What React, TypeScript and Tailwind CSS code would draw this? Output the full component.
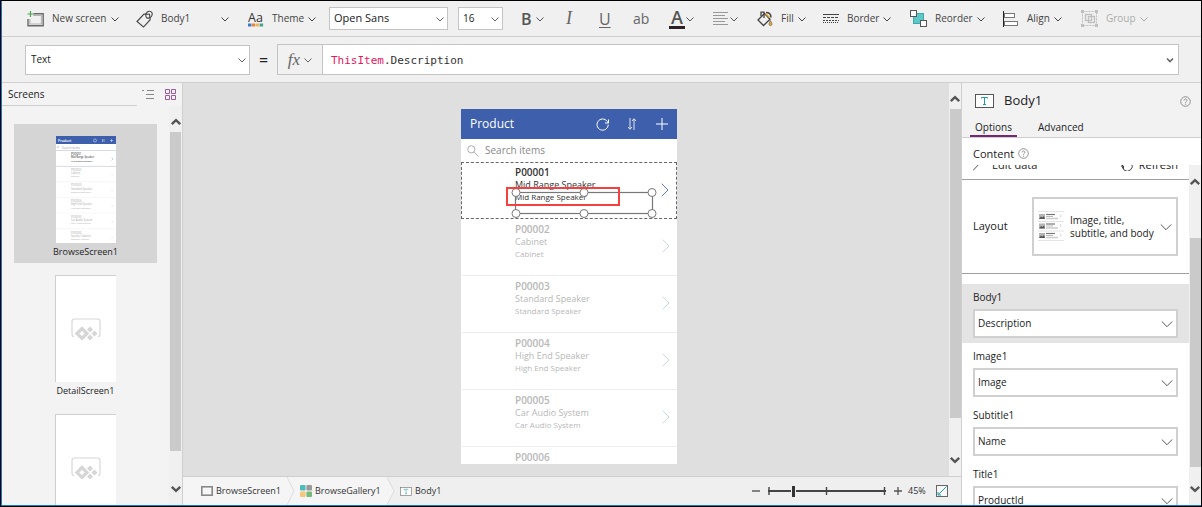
import React from "react";

const products = [
  { id: "P00001", name: "Mid Range Speaker" },
  { id: "P00002", name: "Cabinet" },
  { id: "P00003", name: "Standard Speaker" },
  { id: "P00004", name: "High End Speaker" },
  { id: "P00005", name: "Car Audio System" },
  { id: "P00006", name: "Speaker Cabinet" },
];

function Chevron({ className = "" }: { className?: string }) {
  return (
    <svg className={`h-2 w-2 shrink-0 ${className}`} viewBox="0 0 8 8" fill="none" stroke="currentColor" strokeWidth="1">
      <path d="M0.5 2.5 4 6 7.5 2.5" />
    </svg>
  );
}

function WideChevron({ className = "" }: { className?: string }) {
  return (
    <svg className={`h-2 w-3 shrink-0 text-[#555] ${className}`} viewBox="0 0 12 8" fill="none" stroke="currentColor" strokeWidth="1">
      <path d="M0.8 1.5 6 6.7 11.2 1.5" />
    </svg>
  );
}

function ScrollArrow({ down = false }: { down?: boolean }) {
  return (
    <svg className="h-2 w-3 shrink-0 text-[#555]" viewBox="0 0 12 8" fill="none" stroke="currentColor" strokeWidth="2.4">
      {down ? <path d="M1.8 1.8 6 5.8 10.2 1.8" /> : <path d="M1.8 6.2 6 2.2 10.2 6.2" />}
    </svg>
  );
}

function Tool({ icon, label, className = "" }: { icon: React.ReactNode; label: string; className?: string }) {
  return (
    <button type="button" className={`flex h-full shrink-0 items-center gap-2 text-[10px] text-[#444] ${className}`}>
      {icon}
      <span className="flex items-center gap-1 whitespace-nowrap">
        {label}
        <Chevron />
      </span>
    </button>
  );
}

function NewScreenIcon() {
  return (
    <svg className="h-4 w-[17px]" viewBox="0 0 17 16" fill="none">
      <path d="M6.500 2.700h9.700v12H1V8" stroke="#6a6a6a" strokeWidth="1.400" />
      <path d="M6 4.500h8.500v8.500H2.800V8" stroke="#b5b5b5" strokeWidth="1.200" />
      <path d="M3.500 0v6M.5 3h6" stroke="#4aa84a" strokeWidth="1.200" />
    </svg>
  );
}

function TagIcon() {
  return (
    <svg className="h-[18px] w-[17px]" viewBox="0 0 17 18" fill="none" stroke="#444" strokeWidth="1.1">
      <path d="M1 11.500 8 4l5.500.3.7 5.400L7.500 17z" />
      <path d="M10.500 7.500C9 5.500 10 1.500 13 1.200 16 1 17 4 15.500 6.200 14.500 7.700 12 9 10.500 7.500" />
    </svg>
  );
}

function ThemeIcon() {
  return (
    <svg className="h-4 w-4" viewBox="0 0 16 16">
      <text x="0" y="10.500" fontFamily="Open Sans" fontSize="12.500" fill="#333">Aa</text>
      <rect x="0" y="12.500" width="3.400" height="3" fill="#3c78c8" />
      <rect x="3.900" y="12.500" width="3.400" height="3" fill="#e8823a" />
      <rect x="7.800" y="12.500" width="3.400" height="3" fill="#e8b860" />
      <rect x="11.700" y="12.500" width="3.400" height="3" fill="#45a58c" />
    </svg>
  );
}

function FillIcon() {
  return (
    <svg className="h-4 w-4" viewBox="0 0 16 16" fill="none">
      <path d="M1 9 7.500 2.500 13 8.200 6.500 14.500z" stroke="#444" strokeWidth="1.300" />
      <path d="M4 5V1.200h3V7" stroke="#444" strokeWidth="1.300" />
      <path d="M9 1.500c3 0 5 2 5 5" stroke="#444" strokeWidth="1.500" />
      <path d="M8.500 2.500 12.500 6.500" stroke="#e2a82c" strokeWidth="1.500" />
      <path d="M13.300 9.500c1.200 2 2 3 1.600 4.200-.5 1.200-2.300 1.200-2.800 0-.3-1.200.4-2.400 1.200-4.200z" fill="#e2a82c" stroke="#555" strokeWidth=".6" />
    </svg>
  );
}

function BorderIcon() {
  return (
    <svg className="h-4 w-4" viewBox="0 0 16 16" stroke="#444" fill="none">
      <path d="M0 3.500h16" />
      <path d="M0 6.500h16" strokeDasharray="3 1" />
      <path d="M0 9.500h16" strokeDasharray="2 1" />
      <path d="M0 11.500h16" strokeDasharray="1 1" />
    </svg>
  );
}

function ReorderIcon() {
  return (
    <svg className="h-[17px] w-[17px]" viewBox="0 0 17 17">
      <rect x="3.500" y="3.500" width="10" height="10" fill="#5cc8c8" stroke="#3fa9ab" />
      <rect x=".5" y=".5" width="6" height="6" fill="#fff" stroke="#555" />
      <rect x="10.500" y="10.500" width="6" height="6" fill="#fff" stroke="#555" />
    </svg>
  );
}

function AlignIcon() {
  return (
    <svg className="h-4 w-4" viewBox="0 0 16 16" fill="#fff" stroke="#777">
      <path d="M.5 0v16" stroke="#222" />
      <rect x="1.500" y="2.500" width="10" height="4" />
      <rect x="1.500" y="10.500" width="13" height="4" />
    </svg>
  );
}

function GroupIcon() {
  return (
    <svg className="h-[17px] w-[17px]" viewBox="0 0 17 17" fill="none" stroke="#777">
      <rect x="1.500" y="1.500" width="14" height="14" strokeDasharray="2 1" />
      <rect x="4.500" y="4.500" width="6" height="6" strokeWidth="1.300" />
      <rect x="7.500" y="6.500" width="6" height="6" strokeWidth="1.300" />
      <path d="M0 1.500h3M14 1.500h3M0 15.500h3M14 15.500h3" strokeWidth="3" />
    </svg>
  );
}

function ParagraphIcon() {
  return (
    <svg className="h-[15px] w-4 shrink-0" viewBox="0 0 16 15" stroke="#999" fill="none">
      <path d="M0 1.500h15M0 4.500h12M0 7.500h15M0 10.500h12M0 13.500h15" />
    </svg>
  );
}

function TextIcon({ className = "" }: { className?: string }) {
  return (
    <svg className={className} viewBox="0 0 19 14" fill="none">
      <rect x=".5" y=".5" width="18" height="13" fill="#fff" stroke="#555" />
      <path d="M6.500 4.500V3.500h6v1M9.500 3.500v7M8 10.500h3" stroke="#1f9d9d" />
    </svg>
  );
}

function HelpIcon() {
  return (
    <svg className="h-[11px] w-[11px] shrink-0" viewBox="0 0 11 11" fill="none" stroke="#888">
      <circle cx="5.500" cy="5.500" r="4.800" strokeWidth=".9" />
      <path d="M4 4.400C4 2.500 7 2.500 7 4.300 7 5.500 5.500 5.300 5.500 6.800M5.500 7.700v1" strokeWidth=".9" />
    </svg>
  );
}

function Toolbar() {
  return (
    <header className="flex h-9 shrink-0 items-center overflow-hidden border-b border-[#cfcfcf] pl-[25px]">
      <Tool className="w-[109px]" icon={<NewScreenIcon />} label="New screen" />
      <button type="button" className="flex h-full w-28 shrink-0 items-center gap-2 text-[10px] text-[#444]">
        <TagIcon />
        <span className="w-[52px] text-left">Body1</span>
        <Chevron />
      </button>
      <Tool className="w-[81px]" icon={<ThemeIcon />} label="Theme" />
      <label className="relative mr-[10px] flex w-[119px] shrink-0 items-center">
        <select aria-label="Font" className="h-[23px] w-full appearance-none border border-[#c4c4c4] bg-white pl-1 text-[11px] text-[#222]">
          <option>Open Sans</option>
        </select>
        <Chevron className="pointer-events-none absolute right-1 text-[#666]" />
      </label>
      <label className="relative mr-[18px] flex w-[45px] shrink-0 items-center">
        <select aria-label="Font size" className="h-[23px] w-full appearance-none border border-[#c4c4c4] bg-white pl-1 text-[10px] text-[#222]">
          <option>16</option>
        </select>
        <Chevron className="pointer-events-none absolute right-1 text-[#666]" />
      </label>
      <button type="button" aria-label="Bold" className="flex h-full w-[45px] shrink-0 items-center gap-1 text-[#555]">
        <span className="text-[16px] font-semibold">B</span>
        <Chevron />
      </button>
      <button type="button" className="w-[33px] shrink-0 text-left font-['Liberation_Serif',serif] text-[18px] italic text-[#666]">I</button>
      <button type="button" className="w-[34px] shrink-0 text-left text-[16px] text-[#666] underline underline-offset-2">U</button>
      <button type="button" className="w-9 shrink-0 text-left text-[14px] text-[#666]">ab</button>
      <button type="button" aria-label="Font color" className="flex w-11 shrink-0 items-center gap-px text-[#555]">
        <span className="w-4 border-b-[3px] border-[#2b2024] text-center text-[18px] leading-[18px] font-semibold">A</span>
        <Chevron />
      </button>
      <button type="button" aria-label="Text alignment" className="flex w-11 shrink-0 items-center gap-px text-[#555]">
        <ParagraphIcon />
        <Chevron />
      </button>
      <Tool className="w-[66px]" icon={<FillIcon />} label="Fill" />
      <Tool className="w-[87px]" icon={<BorderIcon />} label="Border" />
      <Tool className="w-[93px]" icon={<ReorderIcon />} label="Reorder" />
      <Tool className="w-[78px]" icon={<AlignIcon />} label="Align" />
      <Tool className="opacity-40" icon={<GroupIcon />} label="Group" />
    </header>
  );
}

function FormulaBar() {
  return (
    <div className="flex h-[46px] shrink-0 items-center border-b border-[#cfcfcf] pr-[22px] pl-[23px]">
      <label className="relative flex w-[225px] shrink-0 items-center">
        <select aria-label="Property" className="h-[30px] w-full appearance-none border border-[#c4c4c4] bg-white pl-[5px] text-[10px] text-[#222]">
          <option>Text</option>
        </select>
        <Chevron className="pointer-events-none absolute right-1 text-[#666]" />
      </label>
      <span className="w-[27px] text-center text-[16px] text-[#222]">=</span>
      <div className="flex h-[31px] flex-1 items-center border border-[#c4c4c4] bg-white">
        <button type="button" className="flex h-full w-[45px] items-center justify-center gap-1 border-r border-[#c4c4c4] bg-[#f1f1f1] text-[#666]">
          <span className="font-['Liberation_Serif',serif] text-[17px] italic">fx</span>
          <Chevron />
        </button>
        <div role="textbox" aria-label="Formula" contentEditable suppressContentEditableWarning className="flex-1 pt-[3px] pl-2 font-['DejaVu_Sans_Mono',monospace] text-[11px] text-[#333] outline-none">
          <span className="text-[#e3195e]">ThisItem</span>.Description
        </div>
        <svg className="mr-1 h-2 w-2" viewBox="0 0 8 8" fill="none" stroke="#666" strokeWidth="1.600">
          <path d="M1 2.500 4 5.500 7 2.500" />
        </svg>
      </div>
    </div>
  );
}

function BrowseThumbnail() {
  return (
    <svg className="h-[107px] w-[60px] bg-white" viewBox="0 0 60 107" fontFamily="Open Sans" fontSize="3.200">
      <rect width="60" height="8" fill="#3e5fab" />
      <text x="2" y="5.800" fill="#fff" fontSize="3.500" fontWeight="600">Product</text>
      <circle cx="39" cy="4.500" r="1.500" fill="none" stroke="#cfd8ee" strokeWidth=".6" />
      <path d="M46.500 3v3M48 3v3M54 4.500h3M55.500 3v3" stroke="#cfd8ee" strokeWidth=".6" />
      <circle cx="2" cy="11" r="1" fill="none" stroke="#bbb" strokeWidth=".5" />
      <text x="6" y="12.800" fill="#999" fontSize="3">Search items</text>
      <path d="M0 14.500h60M0 30.500h60" stroke="#d5d9ea" />
      {products.map((p, i) => (
        <g key={p.id} transform={`translate(0 ${i * 15.7})`} fill={i ? "#aaa" : "#222"}>
          <text x="15" y="19" fontSize="3">{p.id}</text>
          <text x="15" y="22.300" fontSize="2.600">{p.name}</text>
          <text x="15" y="25.500" fontSize="2.400">{p.name}</text>
          <path d="M55.500 21.500l1.500 1.500-1.500 1.500" fill="none" stroke={i ? "#dde" : "#89a4dd"} strokeWidth=".5" />
          <path d="M0 30h60" stroke="#eee" strokeWidth=".5" />
        </g>
      ))}
    </svg>
  );
}

function EmptyThumbnail() {
  return (
    <div className="flex h-[107px] w-[61px] items-center justify-center border-t border-l border-[#cfcfcf] bg-white">
      <svg className="h-[22px] w-[30px]" viewBox="0 0 30 22" fill="none">
        <path d="M3 18.500Q1 18.500 1 16V3.500Q1 1 3.500 1h23Q29 1 29 3.500V16q0 2.500-2 2.500" stroke="#d8d8d8" strokeWidth="1.200" />
        <path d="M11 10.500 6 15.500l5 5 5-5z" stroke="#d6d6d6" strokeWidth="3.200" />
        <path d="M19 8.500l3 3-3 3-3-3zM19 16.500l3 3-3 3-3-3zM23.500 12.500l3 3-3 3-3-3z" fill="#d6d6d6" />
      </svg>
    </div>
  );
}

function ScreensPane() {
  return (
    <aside className="flex w-[181px] shrink-0 flex-col border-r border-[#cfcfcf] bg-[#f3f3f3]">
      <div className="flex h-[23px] shrink-0">
        <h2 className="flex w-[135px] items-center border-b border-[#cfcfcf] pl-[6px] text-[10px] text-[#222]">Screens</h2>
        <button type="button" aria-label="Tree view" className="pl-[5px]">
          <svg className="h-[11px] w-[12px]" viewBox="0 0 12 11" fill="none" stroke="#888">
            <path d="M5 1.500h7M4 5.500h8M4 9.500h8M0 1.500h2" />
          </svg>
        </button>
        <button type="button" aria-label="Thumbnail view" className="pl-[11px]">
          <svg className="h-[11px] w-[11px]" viewBox="0 0 11 11" fill="#f3f3f3" stroke="#9a5b9d">
            <path d="M.5.5h4v4h-4zM6.500.5h4v4h-4zM.5 6.500h4v4h-4zM6.500 6.500h4v4h-4z" />
          </svg>
        </button>
      </div>
      <div className="flex min-h-0 flex-1">
        <ul className="flex-1 overflow-hidden pt-[18px] pr-3 pl-3">
          {["BrowseScreen1", "DetailScreen1", "EditScreen1"].map((name, i) => (
            <li key={name} className={i === 0 ? "bg-[#d5d5d5]" : ""}>
              <button type="button" className="flex h-[139px] w-full flex-col items-center pt-3 text-[9px] leading-[18px] text-[#222]">
                {i === 0 ? <BrowseThumbnail /> : <EmptyThumbnail />}
                {name}
              </button>
            </li>
          ))}
        </ul>
        <div className="flex w-[13px] shrink-0 flex-col items-center bg-[#f0f0f0] pt-3 pb-3">
          <ScrollArrow />
          <div className="mt-[6px] mb-[34px] w-[11px] flex-1 bg-[#cacaca]" />
          <ScrollArrow down />
        </div>
      </div>
    </aside>
  );
}

function SelectionOverlay() {
  return (
    <>
      <svg className="absolute top-[25px] left-[49px] h-[30px] w-[146px]" viewBox="0 0 146 30" fill="none" stroke="#777">
        <rect x="4.500" y="4.500" width="137" height="21" strokeWidth="1.200" />
        {[5, 73, 141].map((x) => (
          <g key={x} fill="#fff">
            <circle cx={x} cy="4.500" r="4" />
            <circle cx={x} cy="25.500" r="4" />
          </g>
        ))}
      </svg>
      <div className="absolute top-6 left-11 h-[19px] w-[114px] border-2 border-[#f54040]" />
    </>
  );
}

function PhoneApp() {
  return (
    <div className="h-full w-[216px] overflow-hidden bg-white">
      <div className="flex h-[30px] items-center bg-[#3e5fab] px-[9px] text-white">
        <span className="flex-1 text-[12px]">Product</span>
        <svg className="mr-[19px] h-[13px] w-[13px]" viewBox="0 0 13 13" fill="none" stroke="#fff" strokeWidth="1">
          <path d="M11.800 4.500A5.600 5.600 0 1 0 12.200 6.500M12.500 1.500V5H9" />
        </svg>
        <svg className="mr-5 h-3 w-2" viewBox="0 0 8 12" fill="none" stroke="#dfe6f5" strokeWidth="1">
          <path d="M2 0v11M0 9l2 2.300L4 9M6 12V1M4 3l2-2.300L8 3" />
        </svg>
        <svg className="h-3 w-3" viewBox="0 0 12 12" stroke="#fff">
          <path d="M0 6h12M6 0v12" />
        </svg>
      </div>
      <label className="flex h-[23px] items-center gap-[6px] pl-[6px]">
        <svg className="h-3 w-3 shrink-0" viewBox="0 0 12 12" fill="none" stroke="#999" strokeWidth=".8">
          <circle cx="4.300" cy="4.300" r="3.600" />
          <path d="M7 7l4.500 4.500" />
        </svg>
        <input aria-label="Search items" placeholder="Search items" className="w-full text-[10px] text-[#333] outline-none placeholder:text-[#888]" />
      </label>
      <ul>
        {products.map((p, i) => (
          <li
            key={p.id}
            className={`relative h-[57px] pl-[53px] ${i === 0 ? "border border-dashed border-[#666] text-[#333]" : "ml-px border-b border-[#ececf3] pt-px text-[#b8b8b8]"}`}
          >
            <div className="pt-[2px] text-[10px] leading-[14px] font-semibold">{p.id}</div>
            <div className="text-[9px] leading-[12px]">{p.name}</div>
            <div className="text-[8px] leading-[12px]">{p.name}</div>
            <svg className="absolute top-5 right-[7px] h-[14px] w-2" viewBox="0 0 8 14" fill="none" stroke={i === 0 ? "#5d7cc4" : "#ccd5ec"}>
              <path d="M.7.7 7 7 .7 13.300" />
            </svg>
            {i === 0 && <SelectionOverlay />}
          </li>
        ))}
      </ul>
    </div>
  );
}

function CrumbDivider({ from, to }: { from: string; to: string }) {
  return (
    <svg className="h-full w-[8px] shrink-0" viewBox="0 0 8 28" preserveAspectRatio="none">
      <rect width="8" height="28" fill={to} />
      <path d="M0 0 7 14 0 28z" fill={from} />
      <path d="M0 0 7 14 0 28" fill="none" stroke="#d5d5d5" strokeWidth=".8" />
    </svg>
  );
}

function StatusBar() {
  return (
    <footer className="flex h-[29px] shrink-0 items-center border-t border-[#cfcfcf] bg-[#efefef] text-[9px] text-[#333]">
      <nav aria-label="Selection path" className="flex h-full items-center">
        <a href="#screen" className="flex h-full w-[104px] items-center gap-[3px] bg-[#f5f5f5] pl-[18px]">
          <svg className="h-[10px] w-3 shrink-0" viewBox="0 0 12 10" fill="#f7f7f7" stroke="#888" strokeWidth="1.600">
            <rect x=".8" y=".8" width="10.400" height="8.400" />
          </svg>
          BrowseScreen1
        </a>
        <CrumbDivider from="#f5f5f5" to="#f5f5f5" />
        <a href="#gallery" className="flex h-full w-[92px] items-center gap-[3px] bg-[#f5f5f5] pl-[5px]">
          <svg className="h-3 w-3 shrink-0" viewBox="0 0 12 12">
            <rect width="5.600" height="5.600" rx="1" fill="#4fbcbc" />
            <rect x="6.400" width="5.600" height="5.600" rx="1" fill="#999" />
            <rect y="6.400" width="5.600" height="5.600" rx="1" fill="#f5c67e" />
            <rect x="6.400" y="6.400" width="5.600" height="5.600" rx="1" fill="#77bb7c" />
          </svg>
          BrowseGallery1
        </a>
        <CrumbDivider from="#f5f5f5" to="#efefef" />
        <a href="#body" className="flex items-center gap-[3px] pl-[5px]">
          <TextIcon className="h-[9px] w-3 opacity-80" />
          Body1
        </a>
      </nav>
      <div className="ml-auto flex items-center pr-[13px]">
        <button type="button" aria-label="Zoom out" className="mr-2">
          <svg className="h-2 w-2" viewBox="0 0 8 8" stroke="#555"><path d="M0 4h8" strokeWidth="1.400" /></svg>
        </button>
        <div className="relative mr-2 flex h-3 w-[118px] items-center">
          <svg className="absolute inset-0 h-3 w-[118px]" viewBox="0 0 118 12" stroke="#444">
            <path d="M0 6h118" strokeWidth="2" />
            <path d="M1 2v8M116.500 2v8M58.500 2v8" strokeWidth="1.400" />
          </svg>
          <input
            type="range"
            aria-label="Zoom"
            defaultValue={20}
            className="relative h-3 w-full appearance-none bg-transparent [&::-webkit-slider-thumb]:h-[11px] [&::-webkit-slider-thumb]:w-[5px] [&::-webkit-slider-thumb]:appearance-none [&::-webkit-slider-thumb]:border-x [&::-webkit-slider-thumb]:border-[#efefef] [&::-webkit-slider-thumb]:bg-[#333]"
          />
        </div>
        <button type="button" aria-label="Zoom in" className="mr-[6px]">
          <svg className="h-2 w-2" viewBox="0 0 8 8" stroke="#555"><path d="M0 4h8M4 0v8" strokeWidth="1.300" /></svg>
        </button>
        <span className="w-7">45%</span>
        <button type="button" aria-label="Fit to window">
          <svg className="h-3 w-3" viewBox="0 0 12 12" fill="none">
            <rect x=".5" y=".5" width="11" height="11" fill="#f8f8f8" stroke="#666" />
            <path d="M10.500 1.500 2.500 9.500M2 7v3h3" stroke="#1f9d9d" />
          </svg>
        </button>
      </div>
    </footer>
  );
}

function Workspace() {
  return (
    <main className="flex min-w-0 flex-1 flex-col">
      <div className="flex min-h-0 flex-1 bg-[#dfdfdf]">
        <div className="flex flex-1 justify-center pt-[26px] pb-3 pl-[6px]">
          <PhoneApp />
        </div>
        <div className="flex w-3 shrink-0 flex-col items-center bg-[#f0f0f0] pt-3 pb-3">
          <ScrollArrow />
          <div className="mt-[6px] mb-[38px] w-[11px] flex-1 bg-[#cacaca]" />
          <ScrollArrow down />
        </div>
      </div>
      <StatusBar />
    </main>
  );
}

function LayoutPreview() {
  return (
    <svg className="h-[31px] w-[26px] shrink-0" viewBox="0 0 26 31" fill="none">
      {[0, 9.5, 19].map((y) => (
        <g key={y} transform={`translate(0 ${y})`}>
          <path d="M1 3h6v5H1z" fill="#b5b5b5" />
          <path d="M1 8l2-2.500 1.500 1L6 5l1 3z" fill="#555" />
          <path d="M8 3.500h9" stroke="#777" strokeWidth="1.200" />
          <path d="M8 5.500h7" stroke="#aaa" strokeWidth=".8" />
          <path d="M8 7.500h12" stroke="#ccc" strokeWidth="1.500" />
          <path d="M22 3.500l1.200 1.500L22 6.500" stroke="#bbb" strokeWidth=".6" />
          <path d="M0 10.500h26" stroke="#ddd" strokeWidth=".8" />
        </g>
      ))}
      <path d="M0 .5h26" stroke="#e5e5e5" />
    </svg>
  );
}

function Field({ label, value, active = false }: { label: string; value: string; active?: boolean }) {
  return (
    <label className={`block h-[59px] shrink-0 px-[11px] pt-[5px] ${active ? "bg-[#e4e4e4]" : ""}`}>
      <span className="mb-1 block text-[10px] leading-4">{label}</span>
      <span className="relative flex items-center">
        <select className="h-[29px] w-full appearance-none border-2 border-[#d0d0d0] bg-white pl-[3px] text-[10px]">
          <option>{value}</option>
        </select>
        <WideChevron className="pointer-events-none absolute right-[5px]" />
      </span>
    </label>
  );
}

function PropertiesPane() {
  return (
    <aside className="flex w-[240px] shrink-0 flex-col border-l border-[#cfcfcf] bg-white text-[#222]">
      <div className="h-[55px] shrink-0 border-b border-[#cfcfcf] bg-[#f2f2f2]">
        <div className="flex h-9 items-center pr-[10px] pl-[13px]">
          <TextIcon className="mr-[10px] h-[14px] w-[19px]" />
          <h2 className="flex-1 text-[13px]">Body1</h2>
          <HelpIcon />
        </div>
        <div role="tablist" className="flex h-[18px] gap-[13px] pl-2 text-[10px] leading-4">
          <button role="tab" aria-selected="true" type="button" className="w-[47px] border-b-2 border-[#742774]">Options</button>
          <button role="tab" aria-selected="false" type="button" className="border-b-2 border-transparent px-2">Advanced</button>
        </div>
      </div>
      <div className="flex h-[27px] shrink-0 items-center gap-1 pt-1 pl-[11px] text-[11px] leading-3">
        Content
        <HelpIcon />
      </div>
      <div className="flex min-h-0 flex-1">
        <div className="flex min-w-0 flex-1 flex-col overflow-hidden">
          <div className="-mt-[7px] flex h-[22px] shrink-0 items-start justify-between border-b border-[#a0a0a0] pr-[11px] pl-[11px] text-[11px] leading-[13px]">
            <button type="button" className="flex items-center gap-3">
              <svg className="h-3 w-[7px]" viewBox="0 0 7 12" stroke="#555"><path d="M0 11.500 7 4" /></svg>
              Edit data
            </button>
            <button type="button" className="flex items-center gap-[6px]">
              <svg className="h-3 w-3" viewBox="0 0 12 12" fill="none" stroke="#444">
                <path d="M2 4.500a5 5 0 1 0 8.500 0M0 7h2.500v3" />
              </svg>
              Refresh
            </button>
          </div>
          <div className="flex h-[94px] shrink-0 items-center justify-between border-b border-[#a0a0a0] pr-[11px] pl-[11px] text-[11px]">
            Layout
            <button type="button" className="flex h-[59px] w-[146px] items-center border-2 border-[#d0d0d0] pr-1 pl-1 text-left text-[10px] leading-[13px]">
              <LayoutPreview />
              <span className="flex-1 pl-[6px] whitespace-nowrap">
                Image, title,
                <br />
                subtitle, and body
              </span>
              <WideChevron />
            </button>
          </div>
          <div className="h-[10px] shrink-0" />
          <Field label="Body1" value="Description" active />
          <Field label="Image1" value="Image" />
          <Field label="Subtitle1" value="Name" />
          <Field label="Title1" value="ProductId" />
        </div>
        <div className="flex w-3 shrink-0 flex-col items-center bg-[#f0f0f0] pt-[13px] pb-3">
          <ScrollArrow />
          <div className="mt-[52px] mb-[18px] w-[11px] flex-1 bg-[#cacaca]" />
          <ScrollArrow down />
        </div>
      </div>
    </aside>
  );
}

export default function App() {
  return (
    <div className="h-screen border border-black font-['Open_Sans','Noto_Sans',sans-serif]">
      <div className="flex h-full flex-col overflow-hidden border-b border-l border-[#1c77c3] bg-[#f0f0f0]">
        <Toolbar />
        <FormulaBar />
        <div className="flex min-h-0 flex-1">
          <ScreensPane />
          <Workspace />
          <PropertiesPane />
        </div>
      </div>
    </div>
  );
}
